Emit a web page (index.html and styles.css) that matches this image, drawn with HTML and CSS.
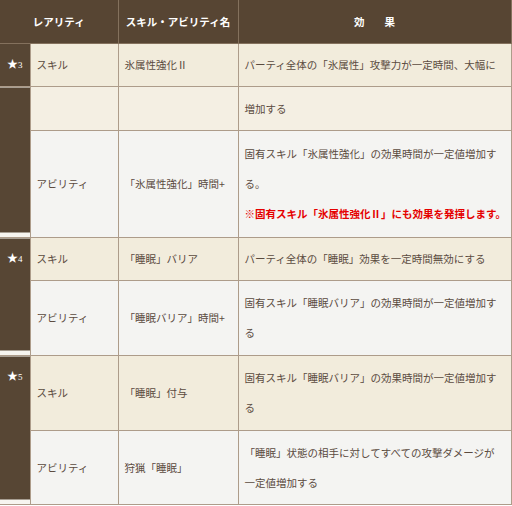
FILE: index.html
```html
<!DOCTYPE html>
<html lang="ja">
<head>
<meta charset="utf-8">
<title>スキル・アビリティ</title>
<link rel="stylesheet" href="styles.css">
</head>
<body>
<table class="tbl">
  <colgroup><col class="c1"><col class="c2"><col class="c3"><col class="c4"></colgroup>
  <thead>
    <tr class="hd"><th colspan="2">レアリティ</th><th>スキル・アビリティ名</th><th><span class="kk">効</span><span>果</span></th></tr>
  </thead>
  <tbody>
    <tr class="h43 skill">
      <td class="rar"><span class="st">★</span><span class="num">3</span></td>
      <td>スキル</td><td>氷属性強化Ⅱ</td>
      <td>パーティ全体の「氷属性」攻撃力が一定時間、大幅に</td>
    </tr>
    <tr class="h44 cont">
      <td class="rar strip" rowspan="2"></td>
      <td></td><td></td><td>増加する</td>
    </tr>
    <tr class="h107 abil">
      <td>アビリティ</td><td>「氷属性強化」時間+</td>
      <td><span class="ln">固有スキル「氷属性強化」の効果時間が一定値増加す</span><span class="ln">る。</span><span class="ln red">※固有スキル「氷属性強化Ⅱ」にも効果を発揮します。</span></td>
    </tr>
    <tr class="h43 skill">
      <td class="rar strip" rowspan="2"><span class="st">★</span><span class="num">4</span></td>
      <td>スキル</td><td>「睡眠」バリア</td>
      <td>パーティ全体の「睡眠」効果を一定時間無効にする</td>
    </tr>
    <tr class="h75 abil">
      <td>アビリティ</td><td>「睡眠バリア」時間+</td>
      <td><span class="ln">固有スキル「睡眠バリア」の効果時間が一定値増加す</span><span class="ln">る</span></td>
    </tr>
    <tr class="h75 skill">
      <td class="rar strip" rowspan="2"><span class="st">★</span><span class="num">5</span></td>
      <td>スキル</td><td>「睡眠」付与</td>
      <td><span class="ln">固有スキル「睡眠バリア」の効果時間が一定値増加す</span><span class="ln">る</span></td>
    </tr>
    <tr class="h74 abil">
      <td>アビリティ</td><td>狩猟「睡眠」</td>
      <td><span class="ln">「睡眠」状態の相手に対してすべての攻撃ダメージが</span><span class="ln">一定値増加する</span></td>
    </tr>
  </tbody>
</table>
</body>
</html>
```
FILE: styles.css
```css
html, body {
  margin: 0;
  padding: 0;
  background: #ffffff;
}
body {
  font-family: "Noto Sans CJK JP", "Noto Sans", sans-serif;
  font-size: 10.5px;
  color: #5b4b3f;
}
.tbl {
  border-collapse: collapse;
  table-layout: fixed;
  width: 511px;
}
.c1 { width: 30px; }
.c2 { width: 88px; }
.c3 { width: 120px; }
.c4 { width: 273px; }

.tbl th {
  background: #574533;
  color: #ffffff;
  font-weight: bold;
  font-size: 10.5px;
  height: 43px;
  padding: 0;
  border: 1px solid #84715d;
  border-top: 0;
  text-align: center;
  vertical-align: middle;
}
.tbl th:first-child { border-left: 0; }
.kk { margin-right: 20px; }

.tbl td {
  border: 1px solid #ad9c8a;
  padding: 0 6px;
  line-height: 30px;
  vertical-align: middle;
  white-space: nowrap;
  overflow: visible;
}
.ln { display: block; }
.red { color: #e50000; font-weight: bold; }

.skill td { background: #f2ecdc; }
.cont td { background: #f4efe3; }
.abil td { background: #f4f4f2; }

.tbl td.rar {
  background: #574634;
  border-left: 0;
  color: #ffffff;
  padding: 13px 0 0;
  text-align: center;
  vertical-align: top;
  line-height: 12px;
}
.tbl td.strip {
  background: linear-gradient(to bottom, #574634 calc(100% - 5px), #f7f5f0 calc(100% - 5px));
}
.st { font-size: 11px; }
.num { font-family: "Liberation Serif", serif; font-size: 9px; }

.h43 { height: 43px; }
.h44 { height: 44px; }
.h107 { height: 107px; }
.h75 { height: 75px; }
.h74 { height: 74px; }
```
